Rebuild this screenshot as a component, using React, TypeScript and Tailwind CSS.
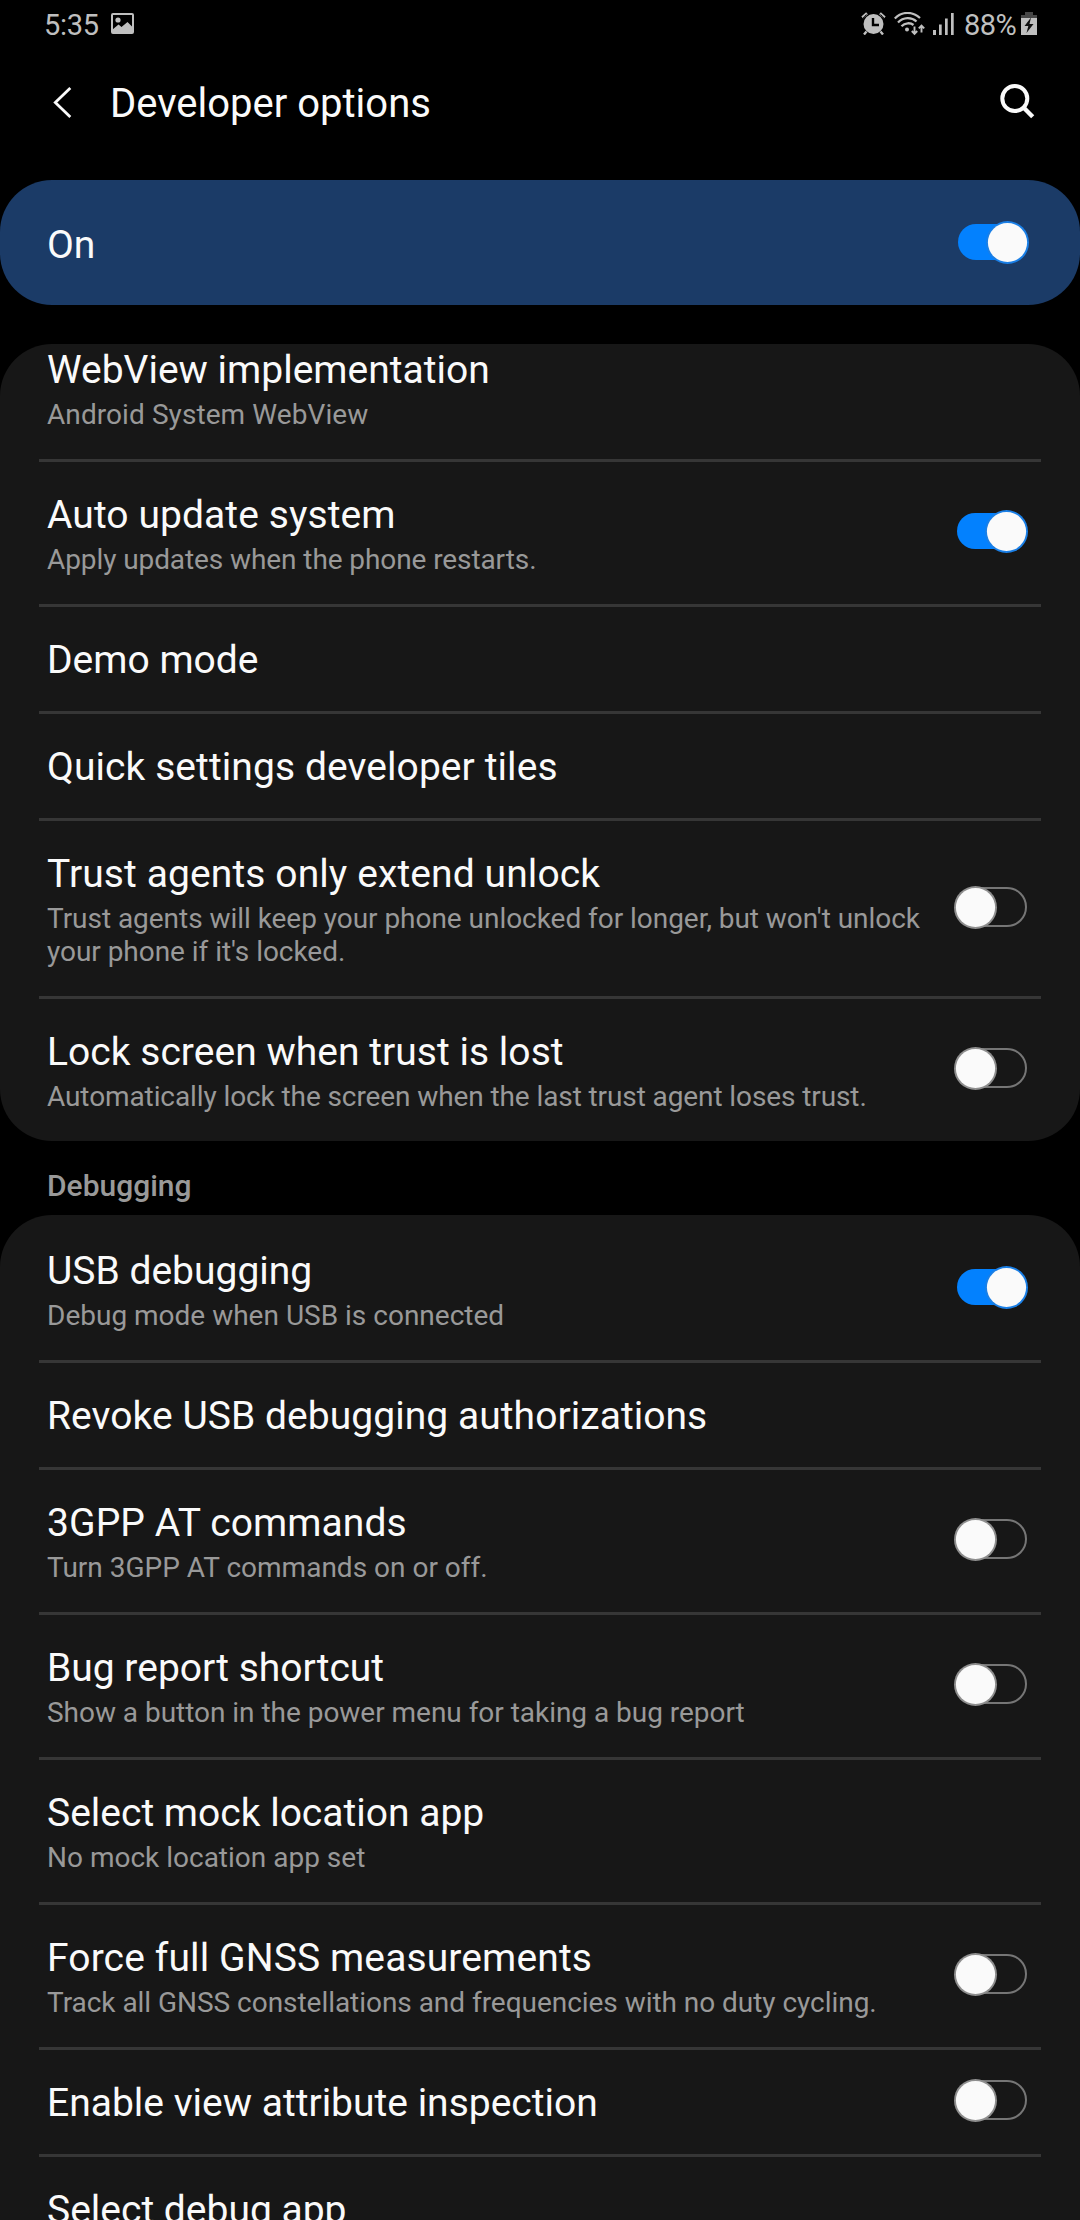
import React from "react";

type Item = { title: string; sub?: string; on?: boolean; titleClass?: string; subClass?: string };

const general: Item[] = [
  { title: "WebView implementation", sub: "Android System WebView", subClass: "tracking-[0.08px]" },
  {
    title: "Auto update system",
    sub: "Apply updates when the phone restarts.",
    on: true,
    titleClass: "tracking-[0.08px]",
    subClass: "tracking-[-0.09px]",
  },
  { title: "Demo mode" },
  { title: "Quick settings developer tiles", titleClass: "tracking-[0.08px]" },
  {
    title: "Trust agents only extend unlock",
    sub: "Trust agents will keep your phone unlocked for longer, but won't unlock your phone if it's locked.",
    on: false,
    titleClass: "tracking-[0.1px]",
    subClass: "tracking-[-0.04px]",
  },
  {
    title: "Lock screen when trust is lost",
    sub: "Automatically lock the screen when the last trust agent loses trust.",
    on: false,
    titleClass: "tracking-[0.03px]",
    subClass: "tracking-[-0.1px]",
  },
];

const debugging: Item[] = [
  { title: "USB debugging", sub: "Debug mode when USB is connected", on: true },
  { title: "Revoke USB debugging authorizations", titleClass: "tracking-[0.05px]" },
  { title: "3GPP AT commands", sub: "Turn 3GPP AT commands on or off.", on: false, titleClass: "tracking-[0.08px]" },
  {
    title: "Bug report shortcut",
    sub: "Show a button in the power menu for taking a bug report",
    on: false,
    subClass: "tracking-[-0.03px]",
  },
  { title: "Select mock location app", sub: "No mock location app set" },
  {
    title: "Force full GNSS measurements",
    sub: "Track all GNSS constellations and frequencies with no duty cycling.",
    on: false,
    titleClass: "tracking-[0.12px]",
    subClass: "tracking-[-0.04px]",
  },
  { title: "Enable view attribute inspection", on: false },
  { title: "Select debug app" },
];

function Switch({ on }: { on: boolean }) {
  return (
    <svg width="75" height="43" viewBox="0 0 75 43" className="shrink-0" role="switch" aria-checked={on}>
      {on ? (
        <>
          <rect x="3" y="3" width="70" height="36" rx="18" fill="#0381fe" />
          <circle cx="52.5" cy="21.5" r="21.5" fill="#1a7fe6" />
          <circle cx="52.5" cy="21.5" r="19.6" fill="#fafafa" />
        </>
      ) : (
        <>
          <rect x="5" y="2" width="67" height="38" rx="19" fill="none" stroke="#767676" strokeWidth="2" />
          <circle cx="21.5" cy="21.5" r="21.5" fill="#8e8e8e" />
          <circle cx="21.5" cy="21.5" r="19.6" fill="#fafafa" />
        </>
      )}
    </svg>
  );
}

function Row({ item, last }: { item: Item; last: boolean }) {
  return (
    <li>
      <div className="flex items-center justify-between pr-[51px] pl-[47px]">
        <div className="w-[880px] pt-[30px] pb-7">
          <h2 className={`text-[39px] leading-[46px] whitespace-nowrap text-[#fafafa] ${item.titleClass ?? ""}`}>
            {item.title}
          </h2>
          {item.sub && (
            <p className={`mt-[5px] text-[28px] leading-[33px] text-[#999999] ${item.subClass ?? ""}`}>{item.sub}</p>
          )}
        </div>
        {item.on !== undefined && (
          <div className="pb-[3px]">
            <Switch on={item.on} />
          </div>
        )}
      </div>
      {!last && <div className="mx-[39px] h-[3px] bg-[#363636]" />}
    </li>
  );
}

function StatusBar() {
  return (
    <div className="flex h-12 shrink-0 items-start justify-between pr-[43px] pl-[44px] text-[29px] leading-[36px] text-[#bfbfbf]">
      <div className="flex gap-[13px] pt-[7px]">
        <span className="w-[54px] tracking-[-0.3px] whitespace-nowrap">5:35</span>
        <svg width="23" height="21" viewBox="0 0 23 21" className="mt-[6px]">
          <rect x="1" y="1" width="21" height="19" rx="1" fill="none" stroke="#bfbfbf" strokeWidth="2" />
          <circle cx="7" cy="7" r="2.6" fill="#bfbfbf" />
          <path d="M1 17 7.5 11.5 10.5 14 16.500 9 22 14.500V20H1Z" fill="#bfbfbf" />
        </svg>
      </div>
      <div className="flex pt-[7px]">
        <svg width="25" height="23" viewBox="0 0 25 23" className="mt-[5px] mr-2" fill="none" stroke="#bfbfbf">
          <circle cx="12.500" cy="12" r="10" fill="#bfbfbf" stroke="none" />
          <path d="M1.200 5.500 6 1.200M23.800 5.500 19 1.200" strokeWidth="2.600" />
          <path d="M5.500 19.500 3 22.500M19.500 19.500 22 22.500" strokeWidth="2.400" />
          <path d="M5.500 2.500A12 12 0 0 0 2 6.500M19.500 2.500A12 12 0 0 1 23 6.500" stroke="#000" strokeWidth="1" />
          <path d="M12 6V13H18" stroke="#000" strokeWidth="2.400" />
        </svg>
        <svg
          width="31"
          height="24"
          viewBox="0 0 31 24"
          className="mt-[5px] mr-2"
          fill="none"
          stroke="#bfbfbf"
          strokeWidth="2.300"
        >
          <path d="M.8 6.500C8-.8 18.500-.8 26 6" />
          <path d="M4 10.500C9.500 4.800 17.500 4.800 22.500 9.500" />
          <path d="M7.500 14.300C11 10.500 16.500 10.500 19.500 13" />
          <circle cx="13" cy="17.500" r="2" fill="#bfbfbf" stroke="none" />
          <path d="M20.500 14.500V22M17.800 19 20.500 21.800 23.200 19" strokeWidth="1.900" />
          <path d="M27.500 20.500V13.500M24.800 16.300 27.500 13.500 30.200 16.300" strokeWidth="1.900" />
        </svg>
        <svg width="21" height="22" viewBox="0 0 21 22" className="mt-[6px] mr-[10px]" fill="#bfbfbf">
          <rect x="0" y="17" width="3" height="5" />
          <rect x="6" y="11.500" width="2.700" height="10.500" />
          <rect x="12" y="5.500" width="2.700" height="16.500" />
          <rect x="18" y="0" width="2.700" height="22" />
        </svg>
        <span className="w-[57px] tracking-[-0.6px] whitespace-nowrap">88%</span>
        <svg width="16" height="23" viewBox="0 0 16 23" className="mt-[5px]">
          <path d="M4 0H12V3H16V6H0V3H4Z" fill="#464646" />
          <rect y="6" width="16" height="17" fill="#bfbfbf" />
          <path d="M10 5.500 3.500 14H7.300L5.500 21 12.500 12H8.500Z" fill="#111" />
        </svg>
      </div>
    </div>
  );
}

export default function App() {
  return (
    <main className="flex h-[2220px] w-[1080px] flex-col overflow-hidden bg-black font-['Roboto',sans-serif]">
      <StatusBar />
      <header className="flex h-[132px] shrink-0 items-start justify-between pr-[45px] pl-[53px]">
        <div className="flex items-start">
          <svg width="19" height="32" viewBox="0 0 19 32" className="mt-[39px] mr-[38px]">
            <path d="M17.300 1 2.300 15.500 17.300 30" fill="none" stroke="#fafafa" strokeWidth="2.800" />
          </svg>
          <h1 className="mt-8 text-[40px] leading-[48px] whitespace-nowrap text-[#fafafa]">Developer options</h1>
        </div>
        <svg width="35" height="35" viewBox="0 0 35 35" className="mt-9" fill="none" stroke="#fafafa" strokeWidth="4">
          <circle cx="14.800" cy="14.500" r="12.500" />
          <path d="M23.500 23.500 32.700 32.700" strokeWidth="4.400" />
        </svg>
      </header>

      <section className="flex h-[125px] shrink-0 items-center justify-between rounded-[52px] bg-[#1b3b67] pr-[50px] pl-[47px]">
        <span className="pt-1 text-[39px] leading-[46px] text-[#fafafa]">On</span>
        <Switch on />
      </section>

      <section className="mt-[39px] flex h-[797px] shrink-0 flex-col justify-end overflow-hidden rounded-[52px] bg-[#171717]">
        <ul>
          {general.map((item, i) => (
            <Row key={item.title} item={item} last={i === general.length - 1} />
          ))}
        </ul>
      </section>

      <h3 className="h-[74px] shrink-0 pt-7 pl-[47px] text-[30px] leading-[34px] font-medium text-[#999999]">
        Debugging
      </h3>

      <section className="shrink-0 rounded-t-[52px] bg-[#171717] pt-[3px]">
        <ul>
          {debugging.map((item, i) => (
            <Row key={item.title} item={item} last={i === debugging.length - 1} />
          ))}
        </ul>
      </section>
    </main>
  );
}
